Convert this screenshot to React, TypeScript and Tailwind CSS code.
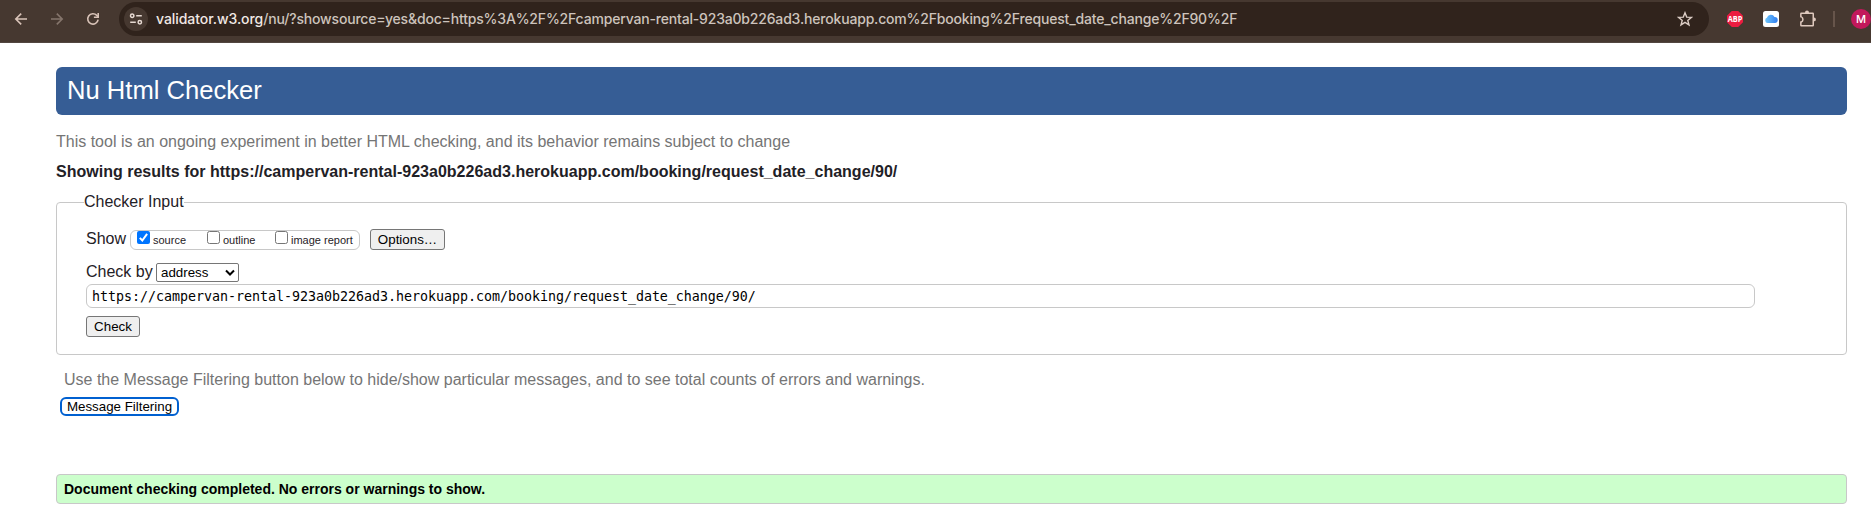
import type { ReactNode } from 'react';

const DOC_URL =
  'https://campervan-rental-923a0b226ad3.herokuapp.com/booking/request_date_change/90/';

function BrowserBar() {
  return (
    <div className="flex h-[43px] items-start border-b border-[#524640] bg-[#463830] font-['Inter',sans-serif] text-[#dcc8bf]">
      <div className="flex h-[38px] w-[119px] shrink-0 items-center pl-[13px]">
        <svg width="16" height="16" viewBox="0 0 16 16" fill="none" stroke="#d9c3b8" strokeWidth="1.6">
          <path d="M14 8H3M8.2 2.6 2.8 8l5.4 5.4" />
        </svg>
        <svg className="ml-[20px]" width="16" height="16" viewBox="0 0 16 16" fill="none" stroke="#85756c" strokeWidth="1.6">
          <path d="M2 8h11M7.8 2.6 13.2 8l-5.4 5.4" />
        </svg>
        <svg className="ml-[20px]" width="16" height="16" viewBox="0 0 16 16" fill="none" stroke="#d9c3b8" strokeWidth="1.6">
          <path d="M13.1 8.6A5.2 5.2 0 1 1 11.8 4.4L13 5.6" />
          <path d="M13.2 2v4.3H8.9" />
        </svg>
      </div>
      <div className="mt-[2px] flex h-[34px] w-[1590px] shrink-0 items-center rounded-full bg-[#30231c] pl-[5px] pr-[16px]">
        <span className="flex size-6 items-center justify-center rounded-full bg-[#463830]">
          <svg width="14" height="14" viewBox="0 0 14 14" fill="none" stroke="#e6d9d2" strokeWidth="1.5">
            <circle cx="3.2" cy="3.7" r="1.7" />
            <path d="M7.2 3.7h5.6M1.2 10.3h5.6" />
            <circle cx="10.8" cy="10.3" r="1.7" />
          </svg>
        </span>
        <span className="ml-[8px] flex-1 whitespace-nowrap text-[14px] leading-5 font-medium tracking-[-0.18px] text-[#cdc3bd]">
          <span className="tracking-[-0.05px] text-[#f0e8e4]">validator.w3.org</span>
          /nu/?showsource=yes&amp;doc=https%3A%2F%2Fcampervan-rental-923a0b226ad3.herokuapp.com%2Fbooking%2Frequest_date_change%2F90%2F
        </span>
        <svg width="16" height="16" viewBox="0 0 16 16" fill="none" stroke="#dccdc5" strokeWidth="1.4">
          <path d="m8 1.8 1.7 4.3 4.7.3-3.6 3 1.2 4.5L8 11.4l-4 2.5 1.2-4.5-3.6-3 4.7-.3z" />
        </svg>
      </div>
      <div className="flex h-[38px] flex-1 items-center overflow-hidden pl-[18px]">
        <svg className="shrink-0" width="16" height="16" viewBox="0 0 16 16">
          <path d="M4.8 0h6.4L16 4.8v6.4L11.2 16H4.8L0 11.2V4.8z" fill="#ec1c40" />
          <text x="8" y="11" textAnchor="middle" textLength="14.6" lengthAdjust="spacingAndGlyphs" fontSize="8.4" fontWeight="700" fontFamily="Open Sans, sans-serif" fill="#fff">ABP</text>
        </svg>
        <svg className="ml-[20px] shrink-0" width="16" height="16" viewBox="0 0 16 16">
          <defs>
            <linearGradient id="cloud" x1="0" x2="1">
              <stop offset="0" stopColor="#6fc6fb" />
              <stop offset="1" stopColor="#2f7df0" />
            </linearGradient>
          </defs>
          <rect width="16" height="16" rx="2.5" fill="#fff" />
          <path d="M4.6 12a2.7 2.7 0 0 1-.7-5.2A4.1 4.1 0 0 1 11.5 6a3 3 0 0 1 .4 6z" fill="url(#cloud)" />
        </svg>
        <svg className="ml-[20px] shrink-0" width="18" height="18" viewBox="0 0 18 18" fill="#dfc9be">
          <path fillRule="evenodd" d="M2.3 2.5H6a2 2 0 0 1 4 0h3.8q1.2 0 1.2 1.2V7.500a1.9 1.9 0 0 1 0 3.8v4q0 1.2-1.2 1.2H2.3q-1.2 0-1.2-1.2v-3.8a2.1 2.1 0 0 0 0-4.200V3.700q0-1.200 1.200-1.200zM2.600 4v2.300a3.500 3.500 0 0 1 0 6.400V15h10.900V4z" />
        </svg>
        <span className="ml-[16px] h-4 w-[2px] shrink-0 bg-[#67554b]" />
        <span className="ml-[16px] flex size-5 shrink-0 items-center justify-center rounded-full bg-[#c2185b] text-[11px] font-medium text-white">M</span>
      </div>
    </div>
  );
}

function Option({ label, checked = false, className }: { label: string; checked?: boolean; className: string }) {
  return (
    <label className={`flex items-start ${className}`}>
      {checked ? (
        <svg width="13" height="13" viewBox="0 0 13 13">
          <rect width="13" height="13" rx="2" fill="#0075ff" />
          <path d="m2.8 6.9 2.5 2.6 4.8-6.6" fill="none" stroke="#fff" strokeWidth="2" />
        </svg>
      ) : (
        <span className="size-[13px] rounded-[2.5px] border border-[#767676] bg-white" />
      )}
      <span className="mt-[2px] ml-[3px] text-[11px] leading-[14px] whitespace-nowrap text-[#1f2126]">{label}</span>
    </label>
  );
}

function PushButton({ children, className }: { children: ReactNode; className: string }) {
  return (
    <button className={`flex h-[21px] items-center justify-center rounded-[3px] border border-[#767676] bg-[#efefef] text-[13.333px] leading-none text-black ${className}`}>
      {children}
    </button>
  );
}

export default function App() {
  return (
    <div className="h-[517px] w-full overflow-hidden bg-white font-['Liberation_Sans',Arial,sans-serif] text-base text-[#1f2126]">
      <BrowserBar />
      <main className="mr-[24px] ml-[56px] pt-6">
        <h1 className="flex h-12 items-center rounded-md bg-[#365d95] pl-[11px] text-[25.6px] leading-none text-white">
          Nu Html Checker
        </h1>
        <p className="mt-[17px] leading-5 text-[#757575]">
          This tool is an ongoing experiment in better HTML checking, and its behavior remains subject to change
        </p>
        <h2 className="mt-[10px] leading-5 font-bold tracking-[0.01px]">Showing results for {DOC_URL}</h2>
        <fieldset className="mt-[10px] h-[163px] rounded-[4px] border border-[#c8c8c8] pl-[29px]">
          <legend className="ml-[-2px] h-[21px] leading-[19px]">Checker Input</legend>
          <div className="mt-[16px] flex h-[21px] items-center">
            <span className="w-[44px] pb-[2px] leading-5">Show</span>
            <div className="flex h-5 w-[230px] items-start rounded-[6px] border border-[#c8c8c8]">
              <Option label="source" checked className="ml-[6px] w-[70px]" />
              <Option label="outline" className="w-[68px]" />
              <Option label="image report" className="" />
            </div>
            <PushButton className="ml-[10px] w-[75px]">Options…</PushButton>
          </div>
          <div className="mt-[13px] flex h-[19px] items-center">
            <span className="w-[70px] pb-[2px] leading-5">Check by</span>
            <div className="flex h-[19px] w-[83px] items-center justify-between rounded-[2px] border border-[#767676] pr-[3px] pl-[4px] text-[13.333px] leading-none text-black">
              address
              <svg width="10" height="8" viewBox="0 0 10 8" fill="none" stroke="#000" strokeWidth="2">
                <path d="m1 1.5 4 4 4-4" />
              </svg>
            </div>
          </div>
          <div className="mt-[2px] flex h-6 w-[1669px] items-center rounded-[6px] border border-[#c8c8c8] pt-[2px] pl-[5px] font-['DejaVu_Sans_Mono',monospace] text-[13.333px] leading-none tracking-[-0.026px] text-black">
            {DOC_URL}
          </div>
          <PushButton className="mt-[8px] w-[54px]">Check</PushButton>
        </fieldset>
        <p className="mt-[15px] ml-[8px] leading-5 text-[#757575]">
          Use the Message Filtering button below to hide/show particular messages, and to see total counts of errors and warnings.
        </p>
        <button className="mt-[7px] ml-[4px] flex h-[19px] w-[119px] items-center justify-center rounded-[6px] border-2 border-[#0060d0] text-[13.333px] leading-none text-black">
          Message Filtering
        </button>
        <div className="mt-[58px] flex h-[30px] items-center rounded-[4px] border border-[#c8c8c8] bg-[#ccffcc] pl-[7px] text-[14px] font-bold text-black">
          Document checking completed. No errors or warnings to show.
        </div>
      </main>
    </div>
  );
}
